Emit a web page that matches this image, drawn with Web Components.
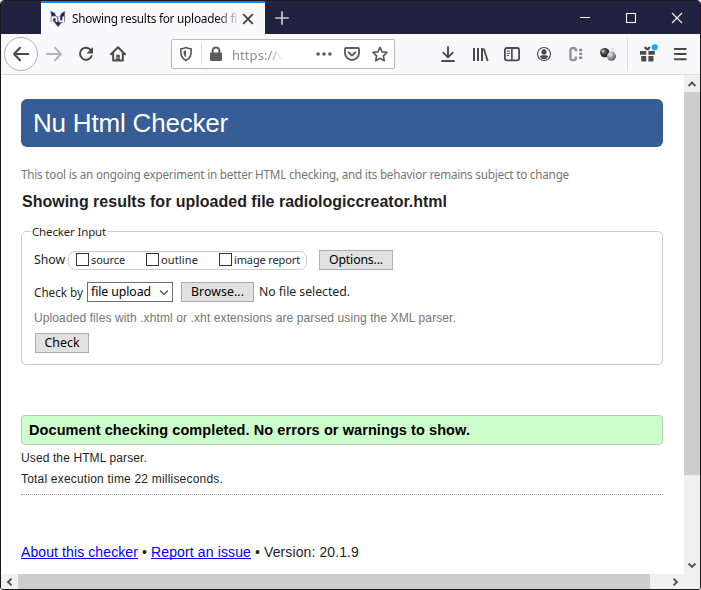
<!DOCTYPE html>
<html lang="en">
<head>
<meta charset="utf-8">
<title>Showing results for uploaded file</title>
<style>
html,body{margin:0;height:100%;overflow:hidden;background:#fff}
</style>
</head>
<body>
<browser-window>
  <tab-strip slot="tabs"></tab-strip>
  <nav-bar slot="nav"></nav-bar>
  <checker-page></checker-page>
</browser-window>
<script>
function define(name, html, after) {
  const t = document.createElement('template');
  t.innerHTML = html;
  customElements.define(name, class extends HTMLElement {
    constructor() {
      super();
      this.attachShadow({mode: 'open'}).append(t.content.cloneNode(true));
    }
    connectedCallback() { if (after) after.call(this); }
  });
}

/* A single line of text spread evenly over the width given in "w". */
define('text-run', `<style>
:host{display:block;white-space:pre;flex:none}
span{display:inline-block;white-space:pre}
:host([link]) span{text-decoration:underline;text-decoration-skip-ink:none}
</style><span><slot></slot></span>`, function () {
  const s = this.shadowRoot.querySelector('span');
  const w = +this.getAttribute('w');
  if (!w) return;
  this.style.width = w + 'px';
  const natural = s.getBoundingClientRect().width;
  s.style.letterSpacing = ((w - natural) / this.textContent.length) + 'px';
});

const icons = {
  back: '<path d="M15.3 8H1M7 1.8 1 8l6 6.2" stroke-width="2" stroke-linecap="round" stroke-linejoin="round"/>',
  forward: '<path d="M.8 8H15M9 1.8 15 8l-6 6.2" stroke-width="2" stroke-linecap="round" stroke-linejoin="round"/>',
  reload: '<path d="M13 4.4A6 6 0 1 0 13.6 10" stroke-width="2" stroke-linecap="round"/><path d="M15 1v6.5H8.5z" fill="currentColor" stroke="none"/>',
  home: '<path d="M1 8.2 8 1.3l7 6.9M3.2 7.5v7h9.6v-7" stroke-width="2" stroke-linecap="round" stroke-linejoin="round"/><path d="M6.2 15V8.8h3.6V15z" fill="currentColor" stroke="none"/><path d="M8 11v1.4" stroke="#f9f9fb" stroke-width="1"/>',
  shield: '<path d="M8 1.6c2.2 1 3.8 1.3 5.2 1.3 0 5.700-.3 9-5.200 11.500C3.100 11.900 2.800 8.600 2.800 2.900 4.200 2.900 5.800 2.600 8 1.600z" stroke-width="1.700" stroke-linejoin="round"/><path d="M8 4.300v7.400C5.900 10 5.600 8.500 5.500 5.100 6.500 5 7.200 4.700 8 4.300z" fill="currentColor" stroke="none"/>',
  lock: '<path d="M4.600 8V4.800a3.400 3.400 0 0 1 6.800 0V8" stroke-width="2"/><rect x="2" y="6.500" width="12" height="8.500" rx="1.300" fill="currentColor" stroke="none"/>',
  dots: '<g fill="currentColor" stroke="none"><circle cx="2.100" cy="8" r="1.800"/><circle cx="8" cy="8" r="1.800"/><circle cx="13.900" cy="8" r="1.800"/></g>',
  pocket: '<path d="M2 2h12a1 1 0 0 1 1 1v4a7 7 0 0 1-14 0V3a1 1 0 0 1 1-1z" stroke-width="1.900"/><path d="M4.600 6.300 8 9.500l3.400-3.200" stroke-width="1.900" stroke-linecap="round" stroke-linejoin="round"/>',
  star: '<path d="m8 1.300 2.100 4.500 4.900.6-3.600 3.400.9 4.900L8 12.300l-4.300 2.400.9-4.900L1 6.400l4.900-.6z" stroke-width="1.700" stroke-linejoin="round"/>',
  download: '<path d="M8 1v10M3.300 6.700 8 11.400l4.700-4.700" stroke-width="1.900" stroke-linecap="round" stroke-linejoin="round"/><path d="M2 15h12" stroke-width="1.800" stroke-linecap="round"/>',
  library: '<path d="M2 2v13M6 2v13M10 2v13" stroke-width="2"/><path d="M11.700 2.500 15.700 15" stroke-width="1.800"/>',
  sidebar: '<rect x=".9" y="2" width="14.200" height="12.300" rx="2" stroke-width="1.800"/><path d="M7.900 2v12" stroke-width="1.600"/><path d="M2.900 5h3M2.900 7.300h3M2.900 9.600h2" stroke-width="1"/>',
  account: '<circle cx="8" cy="8" r="6.500" stroke-width="1.200"/><circle cx="8" cy="5.900" r="2.600" fill="currentColor" stroke="none"/><path d="M3.800 10c1-1 7.400-1 8.400 0-.8 2.200-2.400 3.200-4.200 3.200S4.600 12.200 3.800 10z" fill="currentColor" stroke="none"/>',
  css: '<path d="M8 5.500V4.700Q8 2 5.200 2T2.400 4.700v6.700q0 2.700 2.800 2.700T8 11.400v-.9" stroke-width="2.400" stroke="#929295"/><path d="M12.700 2.800v10.500" stroke="#88888b" stroke-width="3" stroke-dasharray="2.400 1.500"/>',
  gift: '<g fill="currentColor" stroke="none"><path d="M0 5h6.300v3.800H0zM8.400 5h6.300v3.800H8.400zM1.200 9.900h5.100v5.600H1.900q-.7 0-.7-.7zM8.400 9.900h5.100v4.900q0 .7-.7.700H8.400zM4.300.8h1.800l1.200 1.300L8.500.8h1.800v1.500L8.400 4.300H6.200L4.300 2.300z"/></g><circle cx="14.700" cy="1.300" r="3.100" fill="#00b3f4" stroke="none"/>',
  menu: '<path d="M2.800 2.900h11M2.800 8.100h11M2.800 13.300h11" stroke-width="2" stroke-linecap="round"/>',
  close: '<path d="m3.700 3.700 8.600 8.600m0-8.600-8.600 8.600" stroke-width="1.900" stroke-linecap="round"/>',
  plus: '<path d="M8 1.200v13.600M1.200 8h13.600" stroke-width="1.700"/>',
  min: '<path d="M3 7.500h10" stroke-width="1"/>',
  max: '<rect x="3.500" y="3.500" width="9" height="9" stroke-width="1.100"/>',
  exit: '<path d="m3 3 10 10M13 3 3 13" stroke-width="1.100"/>',
  up: '<path d="m4.600 10 3.400-3.500 3.400 3.500" stroke-width="1.900"/>',
  down: '<path d="m4.600 5.500 3.400 3.500 3.400-3.500" stroke-width="1.900"/>',
  left: '<path d="M9.500 4.600 6 8l3.500 3.400" stroke-width="1.900"/>',
  right: '<path d="M5.500 4.600 9 8l-3.500 3.400" stroke-width="1.900"/>',
  caret: '<path d="m4 6.500 4 4 4-4" stroke="#444" stroke-width="1.100"/>',
  balls: '<defs><radialGradient id="a" cx=".35" cy=".35" r=".7"><stop stop-color="#ddd"/><stop offset=".35" stop-color="#555"/><stop offset="1" stop-color="#111"/></radialGradient><radialGradient id="b" cx=".35" cy=".3" r=".8"><stop stop-color="#eee"/><stop offset=".5" stop-color="#999"/><stop offset="1" stop-color="#444"/></radialGradient></defs><circle cx="12.500" cy="4.300" r="2.900" fill="#e4e4e6" stroke="none"/><circle cx="4.700" cy="6.600" r="4.700" fill="url(#a)" stroke="none"/><circle cx="11.400" cy="10.300" r="4.500" fill="url(#b)" stroke="none"/>',
  logo: '<path d="M.5 0 4.800 2 8 9l3.500-7L15 .3 14.500 8 8 16 1.800 8z" fill="#242664" stroke="#a9a9c6" stroke-width=".5"/><path d="M2.200 11V5.600M2.200 8Q2.500 6 4.500 6T6.500 8v3M9.100 5.500v3q0 2 2.100 2t2.200-2v-3M13.400 8v3" stroke="#66667a" stroke-width="3"/><path d="M2.200 11V5.600M2.200 8Q2.500 6 4.500 6T6.500 8v3M9.100 5.500v3q0 2 2.100 2t2.200-2v-3M13.400 8v3" stroke="#fff" stroke-width="1.500"/>'
};
define('ui-icon', `<style>:host{display:block;width:16px;height:16px;flex:none}svg{display:block;overflow:visible}</style><div></div>`, function () {
  this.shadowRoot.querySelector('div').innerHTML =
    `<svg width="16" height="16" viewBox="0 0 16 16" fill="none" stroke="currentColor">${icons[this.getAttribute('name')]}</svg>`;
});

define('scroll-bar', `<style>
:host{display:flex;flex-direction:column;background:#f0f0f0;color:#505050;align-items:center;min-width:0;padding-top:1px}
:host([across]){flex-direction:row;padding:0 0 0 1px}
div{background:#cdcdcd;align-self:stretch;flex:none;height:383px}
:host([across]) div{height:auto;width:632px}
i{flex:1}
</style><slot name="start"></slot><div></div><i></i><slot name="end"></slot>`);

define('browser-window', `<style>
:host{display:flex;flex-direction:column;box-sizing:border-box;width:701px;height:590px;border:1px solid #17171c;border-radius:4px 4px 3px 3px;overflow:hidden;background:#fff}
.view{flex:1;min-height:0;display:grid;grid-template:1fr 15px / 1fr 16px}
.corner{background:#f0f0f0}
</style><slot name="tabs"></slot><slot name="nav"></slot>
<div class="view"><slot></slot>
<scroll-bar><ui-icon slot="start" name="up"></ui-icon><ui-icon slot="end" name="down"></ui-icon></scroll-bar>
<scroll-bar across><ui-icon slot="start" name="left"></ui-icon><ui-icon slot="end" name="right"></ui-icon></scroll-bar>
<div class="corner"></div></div>`);

define('tab-strip', `<style>
:host{display:flex;height:33px;flex:none;background:#202340;color:#f2f2f5;align-items:center;font:11.800px/17px "Noto Sans",sans-serif}
.tab{margin-left:40px;width:224px;height:33px;background:#f9f9fb;border-top:2px solid #0a84ff;box-sizing:border-box;color:#0c0c0d;display:flex;align-items:center;padding:0 9px 0 9px}
.title{width:165px;margin-left:6px;margin-right:3px;-webkit-mask-image:linear-gradient(90deg,#000 145px,transparent 169px);mask-image:linear-gradient(90deg,#000 145px,transparent 169px)}
.tab ui-icon:last-child{color:#444447}
.plus{margin-left:9px;color:#c7c7cf}
.win{margin-left:auto;display:flex;gap:30px;padding-right:15px}
</style>
<div class="tab"><ui-icon name="logo"></ui-icon><div class="title"><text-run w="165">Showing results for uploaded fi</text-run></div><ui-icon name="close"></ui-icon></div>
<ui-icon class="plus" name="plus"></ui-icon>
<div class="win"><ui-icon name="min"></ui-icon><ui-icon name="max"></ui-icon><ui-icon name="exit"></ui-icon></div>`);

define('nav-bar', `<style>
:host{display:flex;height:41px;flex:none;box-sizing:border-box;background:#f9f9fb;border-bottom:1px solid #dcdce0;color:#4a4a4e;align-items:center;font:13px/18px "Noto Sans",sans-serif}
.back{width:34px;height:34px;box-sizing:border-box;border:1px solid #b2b2b6;border-radius:50%;background:#fdfdfe;display:grid;place-items:center;margin:0 8px 0 3px}
.off{color:#b5b5b8;margin-right:16px}
.nav{margin-right:16px}
.url{margin-left:45px;width:224px;height:30px;box-sizing:border-box;border:1px solid #b9b9bd;border-radius:2px;background:#fff;display:flex;align-items:center;padding:0 6px;color:#5b5b5e}
.sep{width:1px;height:22px;background:#e1e1e5;margin:0 6px 0 7px}
.addr{color:#8c8c90;margin-left:8px;width:52px;margin-top:1px;-webkit-mask-image:linear-gradient(90deg,#000 38px,transparent 51px);mask-image:linear-gradient(90deg,#000 38px,transparent 51px)}
.url .dots{margin-left:auto}.url ui-icon~ui-icon.g{margin-left:12px}
.tools{margin-left:auto;display:flex;align-items:center;gap:16px;padding-right:12px}
.line{width:1px;height:34px;background:#dedee2;margin:0 -4px 0 -5px}
</style>
<div class="back"><ui-icon name="back"></ui-icon></div>
<ui-icon class="off" name="forward"></ui-icon><ui-icon class="nav" name="reload"></ui-icon><ui-icon name="home"></ui-icon>
<div class="url"><ui-icon name="shield"></ui-icon><div class="sep"></div><ui-icon name="lock"></ui-icon><div class="addr"><text-run w="52">https://v</text-run></div><ui-icon class="dots" name="dots"></ui-icon><ui-icon class="g" name="pocket"></ui-icon><ui-icon class="g" name="star"></ui-icon></div>
<div class="tools"><ui-icon name="download"></ui-icon><ui-icon name="library"></ui-icon><ui-icon name="sidebar"></ui-icon><ui-icon name="account"></ui-icon><ui-icon name="css"></ui-icon><ui-icon name="balls"></ui-icon><div class="line"></div><ui-icon name="gift"></ui-icon><ui-icon name="menu"></ui-icon></div>`);

define('push-button', `<style>
:host{display:flex;box-sizing:border-box;height:20px;border:1px solid #adadad;background:#e1e1e1;color:#000;align-items:center;justify-content:center;flex:none}
</style><slot></slot>`);

define('check-option', `<style>
:host{display:flex;align-items:center;gap:2px;font-size:11px;line-height:16px}
i{width:13px;height:13px;box-sizing:border-box;border:1px solid #333;background:#fff;margin-top:-2px}
</style><i></i><slot></slot>`);

define('checker-form', `<style>
:host{display:block;margin-top:12px;height:142px;font:12.300px/18px "Noto Sans",sans-serif;color:#1f1f1f}
fieldset{margin:0;padding:0 12px;height:142px;box-sizing:border-box;border:1px solid #ccc;border-radius:5px;min-width:0}
legend{padding:0 1px;margin-left:-3px;font-size:11.500px;line-height:17px;height:17px}
.row{display:flex;align-items:center;height:20px}
.show{margin-top:10px}
.pill{display:flex;width:239px;height:19px;box-sizing:border-box;border:1px solid #ccc;border-radius:7px;margin-left:3px;margin-right:12px;padding-left:7px}
.pill check-option:nth-child(2){margin-left:21px}.pill check-option:nth-child(3){margin-left:21px}
.by{margin-top:12px}
.select{display:flex;align-items:center;width:86px;height:20px;box-sizing:border-box;border:1px solid #707070;background:#fff;color:#000;margin:0 8px 0 4px;padding-left:3px;justify-content:space-between}
.note{font:12px/16px "Liberation Sans",Arial,sans-serif;color:#767676;margin-top:8px}
.go{margin:7px 0 0 1px;width:54px}
</style>
<fieldset><legend><text-run w="74">Checker Input</text-run></legend>
<div class="row show"><text-run w="31">Show</text-run><div class="pill">
<check-option><text-run w="34">source</text-run></check-option><check-option><text-run w="37">outline</text-run></check-option><check-option><text-run w="66">image report</text-run></check-option></div>
<push-button style="width:74px"><text-run w="54">Options...</text-run></push-button></div>
<div class="row by"><text-run w="49" style="font-size:11.700px">Check by</text-run><div class="select"><text-run w="60">file upload</text-run><ui-icon name="caret"></ui-icon></div>
<push-button style="width:73px"><text-run w="53">Browse...</text-run></push-button><text-run w="91" style="margin-left:5px">No file selected.</text-run></div>
<div class="note"><text-run w="422">Uploaded files with .xhtml or .xht extensions are parsed using the XML parser.</text-run></div>
<push-button class="go"><text-run w="35">Check</text-run></push-button>
</fieldset>`);

define('checker-page', `<style>
:host{display:block;overflow:hidden;background:#fff;padding:24px 21px 0 20px;font-family:"Liberation Sans",Arial,sans-serif;color:#1f1f1f}
h1,h2,p{margin:0;font-weight:normal}
h1{height:48px;border-radius:6px;background:#365d95;color:#fff;font-size:26px;line-height:48px;padding-left:12px}
.intro{font:11.700px/18px "Noto Sans",sans-serif;color:#767676;margin-top:18px}
h2{font-size:16px;line-height:20px;font-weight:bold;margin:9px 0 -1px 1px}
.ok{margin-top:50px;box-sizing:border-box;height:30px;border:1px solid #bcc8bc;border-radius:4px;background:#cfc;color:#000;font-size:14.500px;font-weight:bold;line-height:28px;padding-left:7px}
.stat{font-size:12px;line-height:21px}
.stats{margin-top:3px;height:46px;border-bottom:1px dotted #999}
footer{display:flex;margin-top:48px;font-size:14px;line-height:19px}
footer text-run[link]{color:#00f}
.b{width:13px;text-align:center}
</style>
<h1><text-run w="195">Nu Html Checker</text-run></h1>
<p class="intro"><text-run w="548">This tool is an ongoing experiment in better HTML checking, and its behavior remains subject to change</text-run></p>
<h2><text-run w="425">Showing results for uploaded file radiologiccreator.html</text-run></h2>
<checker-form></checker-form>
<p class="ok"><text-run w="441">Document checking completed. No errors or warnings to show.</text-run></p>
<div class="stats"><div class="stat"><text-run w="126">Used the HTML parser.</text-run></div>
<div class="stat"><text-run w="202">Total execution time 22 milliseconds.</text-run></div></div>
<footer><text-run w="117" link>About this checker</text-run><span class="b">•</span><text-run w="100" link>Report an issue</text-run><span class="b">•</span><text-run w="95">Version: 20.1.9</text-run></footer>`);
</script>
</body>
</html>
